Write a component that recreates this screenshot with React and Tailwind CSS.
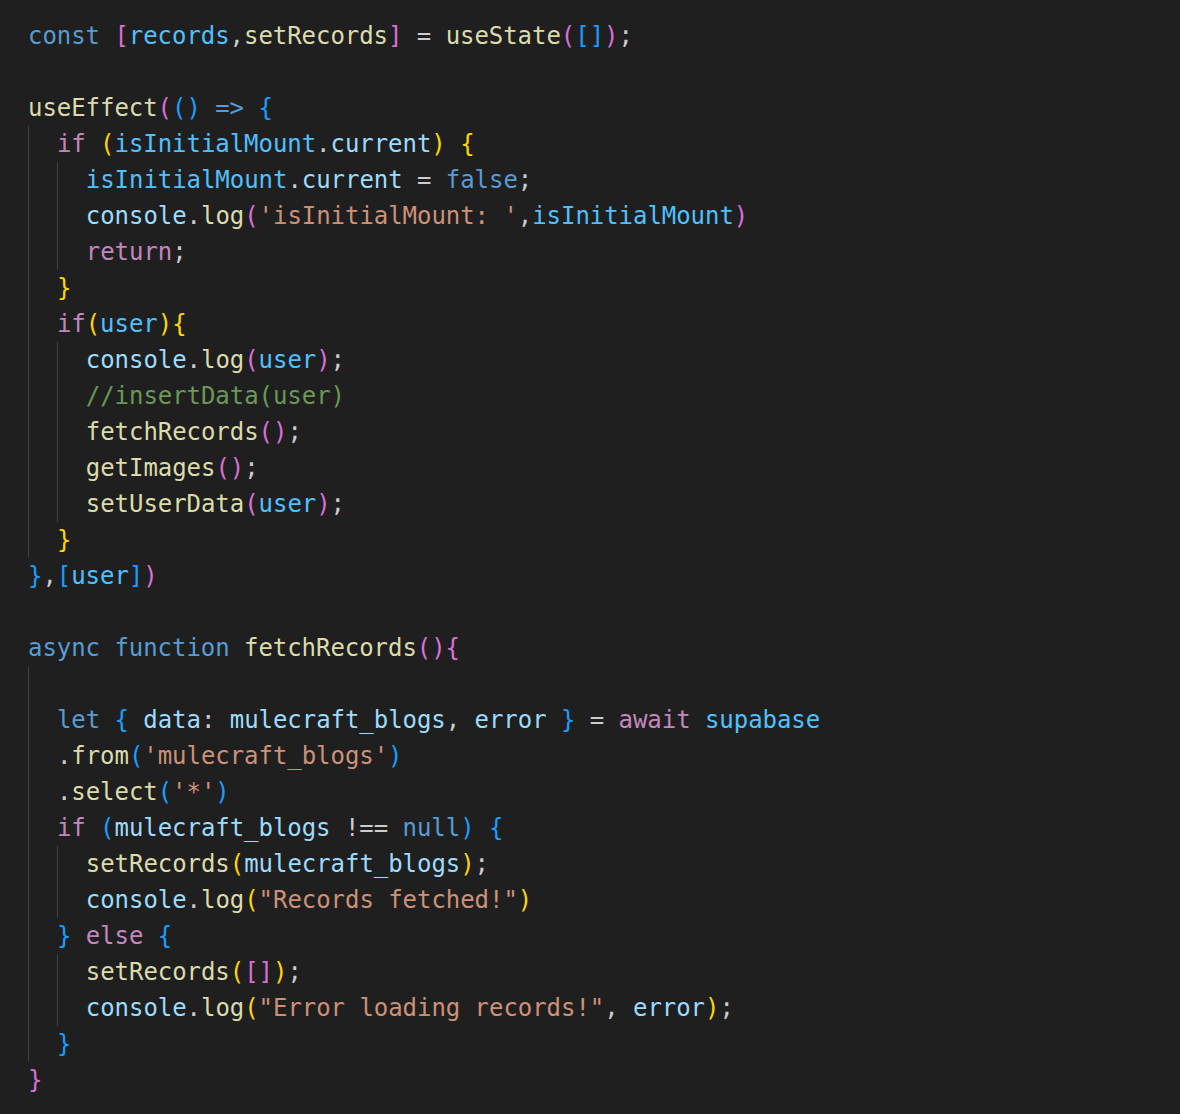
const C = {
  k: "text-[#569cd6]",
  c: "text-[#c586c0]",
  v: "text-[#9cdcfe]",
  n: "text-[#4fc1ff]",
  f: "text-[#dcdcaa]",
  s: "text-[#ce9178]",
  m: "text-[#6a9955]",
  p: "text-[#cccccc]",
  y: "text-[#ffd700]",
  pk: "text-[#da70d6]",
  b: "text-[#179fff]",
};

const lines = [
  [0, [["k", "const"], ["p", " "], ["pk", "["], ["n", "records"], ["p", ","], ["f", "setRecords"], ["pk", "]"], ["p", " = "], ["f", "useState"], ["pk", "("], ["b", "[]"], ["pk", ")"], ["p", ";"]]],
  [0, []],
  [0, [["f", "useEffect"], ["pk", "("], ["b", "()"], ["p", " "], ["k", "=>"], ["p", " "], ["b", "{"]]],
  [1, [["c", "if"], ["p", " "], ["y", "("], ["n", "isInitialMount"], ["p", "."], ["v", "current"], ["y", ")"], ["p", " "], ["y", "{"]]],
  [2, [["n", "isInitialMount"], ["p", "."], ["v", "current"], ["p", " = "], ["k", "false"], ["p", ";"]]],
  [2, [["v", "console"], ["p", "."], ["f", "log"], ["pk", "("], ["s", "'isInitialMount: '"], ["p", ","], ["n", "isInitialMount"], ["pk", ")"]]],
  [2, [["c", "return"], ["p", ";"]]],
  [1, [["y", "}"]]],
  [1, [["c", "if"], ["y", "("], ["n", "user"], ["y", ")"], ["y", "{"]]],
  [2, [["v", "console"], ["p", "."], ["f", "log"], ["pk", "("], ["n", "user"], ["pk", ")"], ["p", ";"]]],
  [2, [["m", "//insertData(user)"]]],
  [2, [["f", "fetchRecords"], ["pk", "()"], ["p", ";"]]],
  [2, [["f", "getImages"], ["pk", "()"], ["p", ";"]]],
  [2, [["f", "setUserData"], ["pk", "("], ["n", "user"], ["pk", ")"], ["p", ";"]]],
  [1, [["y", "}"]]],
  [0, [["b", "}"], ["p", ","], ["b", "["], ["n", "user"], ["b", "]"], ["pk", ")"]]],
  [0, []],
  [0, [["k", "async"], ["p", " "], ["k", "function"], ["p", " "], ["f", "fetchRecords"], ["pk", "(){"]]],
  [1, []],
  [1, [["k", "let"], ["p", " "], ["b", "{"], ["p", " "], ["v", "data"], ["p", ": "], ["v", "mulecraft_blogs"], ["p", ", "], ["v", "error"], ["p", " "], ["b", "}"], ["p", " = "], ["c", "await"], ["p", " "], ["n", "supabase"]]],
  [1, [["p", "."], ["f", "from"], ["b", "("], ["s", "'mulecraft_blogs'"], ["b", ")"]]],
  [1, [["p", "."], ["f", "select"], ["b", "("], ["s", "'*'"], ["b", ")"]]],
  [1, [["c", "if"], ["p", " "], ["b", "("], ["v", "mulecraft_blogs"], ["p", " !== "], ["k", "null"], ["b", ")"], ["p", " "], ["b", "{"]]],
  [2, [["f", "setRecords"], ["y", "("], ["v", "mulecraft_blogs"], ["y", ")"], ["p", ";"]]],
  [2, [["v", "console"], ["p", "."], ["f", "log"], ["y", "("], ["s", "\"Records fetched!\""], ["y", ")"]]],
  [1, [["b", "}"], ["p", " "], ["c", "else"], ["p", " "], ["b", "{"]]],
  [2, [["f", "setRecords"], ["y", "("], ["pk", "[]"], ["y", ")"], ["p", ";"]]],
  [2, [["v", "console"], ["p", "."], ["f", "log"], ["y", "("], ["s", "\"Error loading records!\""], ["p", ", "], ["v", "error"], ["y", ")"], ["p", ";"]]],
  [1, [["b", "}"]]],
  [0, [["pk", "}"]]],
];

const CodeLine = ({ indent, tokens }) => {
  return (
    <div className="flex h-9 whitespace-pre leading-9">
      {Array.from({ length: indent }).map((_, i) => (
        <span key={i} className="inline-block w-[2ch] shrink-0 border-l border-[#404040]" />
      ))}
      <div>
        {tokens.map(([c, t], i) => (
          <span key={i} className={C[c]}>
            {t}
          </span>
        ))}
      </div>
    </div>
  );
};

export default function App() {
  return (
    <div className="min-h-[1114px] w-[1180px] bg-[#1f1f1f] pl-[28px] pt-[18px] font-['DejaVu_Sans_Mono','Liberation_Mono',monospace] text-[24px] tracking-[-0.05px] text-[#cccccc] antialiased">
      {lines.map(([indent, tokens], i) => (
        <CodeLine key={i} indent={indent} tokens={tokens} />
      ))}
    </div>
  );
}
